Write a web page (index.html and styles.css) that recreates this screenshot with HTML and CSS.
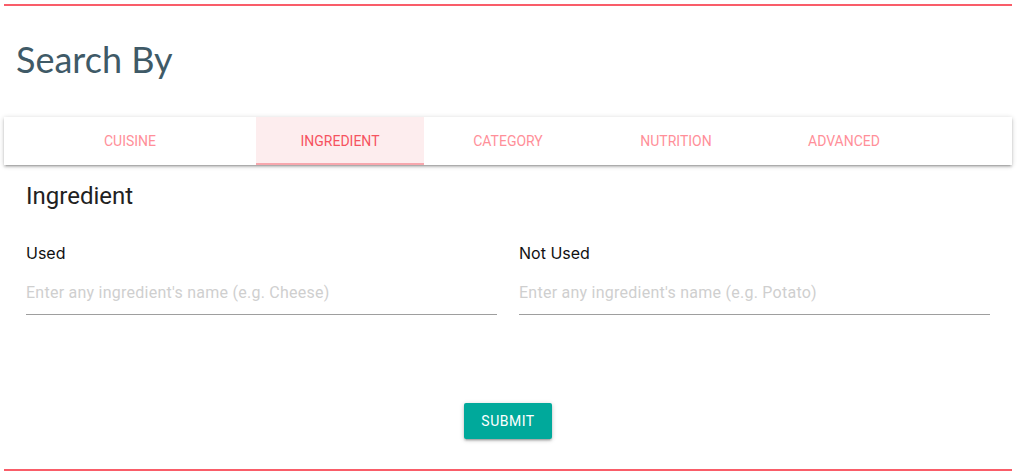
FILE: index.html
```html
<!DOCTYPE html>
<html lang="en">
<head>
<meta charset="utf-8">
<title>Search By</title>
<link rel="stylesheet" href="styles.css">
</head>
<body>
<div class="page">
  <h1 class="title">Search By</h1>
  <nav class="tabs">
    <a class="tab tab-first" href="#">Cuisine</a>
    <a class="tab active" href="#">Ingredient</a>
    <a class="tab" href="#">Category</a>
    <a class="tab" href="#">Nutrition</a>
    <a class="tab" href="#">Advanced</a>
  </nav>
  <section class="panel">
    <h2 class="panel-title">Ingredient</h2>
    <div class="fields">
      <label class="field">
        <span class="field-label">Used</span>
        <input class="field-input" type="text" placeholder="Enter any ingredient's name (e.g. Cheese)">
      </label>
      <label class="field">
        <span class="field-label">Not Used</span>
        <input class="field-input" type="text" placeholder="Enter any ingredient's name (e.g. Potato)">
      </label>
    </div>
    <div class="actions">
      <button class="btn" type="button">Submit</button>
    </div>
  </section>
</div>
</body>
</html>
```

FILE: styles.css
```css
* { box-sizing: border-box; }
html, body { margin: 0; padding: 0; background: #fff; }
body { font-family: Roboto, "Liberation Sans", Arial, sans-serif; }

.page {
  margin: 4px 6px 0 4px;
  border-top: 2px solid #f95d69;
  border-bottom: 2px solid #f95d69;
}

.title {
  margin: 31px 0 36px 12px;
  font-family: Lato, "Open Sans", sans-serif;
  font-weight: 400;
  font-size: 36px;
  line-height: 44px;
  color: #3f5a67;
}

.tabs {
  display: flex;
  height: 48px;
  background: #fff;
  box-shadow: 0 2px 2px 0 rgba(0,0,0,0.14), 0 3px 1px -2px rgba(0,0,0,0.12), 0 1px 5px 0 rgba(0,0,0,0.2);
}
.tab {
  flex: 0 0 168px;
  display: flex;
  align-items: center;
  justify-content: center;
  font-size: 14px;
  text-transform: uppercase;
  text-decoration: none;
  color: #ff8f99;
  border-bottom: 2px solid transparent;
  padding-top: 2px;
}
.tab-first { flex-basis: 252px; }
.tab.active {
  color: #f6535f;
  background: #fdedee;
  border-bottom-color: #f7a7ad;
}

.panel {
  padding: 15px 22px 30px;
}
.panel-title {
  margin: 0;
  font-size: 24px;
  line-height: 32px;
  font-weight: 400;
  color: #212121;
}
.fields {
  display: grid;
  grid-template-columns: 1fr 1fr;
  column-gap: 22px;
  margin-top: 29px;
}
.field { display: flex; flex-direction: column; }
.field-label {
  font-family: Inter, Roboto, sans-serif;
  font-size: 16px;
  line-height: 24px;
  color: #111;
}
.field-input {
  margin-top: 15px;
  border: 0;
  border-bottom: 1px solid #9e9e9e;
  padding: 0 0 10px;
  font-family: Roboto, sans-serif;
  font-size: 16px;
  letter-spacing: 0.25px;
  line-height: 24px;
  height: 35px;
  outline: none;
  background: transparent;
}
.field-input::placeholder { color: #cfcfcf; }

.actions {
  display: flex;
  justify-content: center;
  margin-top: 88px;
}
.btn {
  height: 36px;
  width: 88px;
  border: 0;
  border-radius: 2px;
  background: #00a99b;
  color: #fff;
  font-family: inherit;
  font-size: 14px;
  letter-spacing: 0.5px;
  text-transform: uppercase;
  box-shadow: 0 2px 2px 0 rgba(0,0,0,0.14), 0 3px 1px -2px rgba(0,0,0,0.12), 0 1px 5px 0 rgba(0,0,0,0.2);
}
```
